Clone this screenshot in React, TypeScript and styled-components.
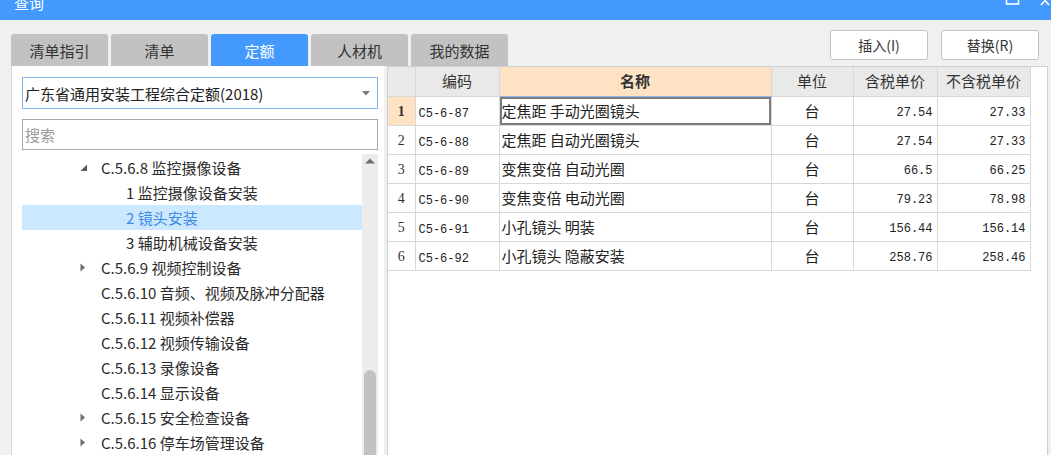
import React from 'react';
import styled, { createGlobalStyle } from 'styled-components';

const GlobalStyle = createGlobalStyle`
  html, body {
    margin: 0;
    padding: 0;
    background: #f0f0f0;
    overflow: hidden;
  }
  body {
    font-family: "Noto Sans CJK SC", "Noto Sans", sans-serif;
    font-size: 15px;
    color: #2b2b2b;
  }
`;

interface treeItem {
  level: number;
  text: string;
  toggle?: 'open' | 'closed';
  selected?: boolean;
}

interface rowInt {
  code: string;
  name: string;
  unit: string;
  taxPrice: string;
  price: string;
}

const TABS = ['清单指引', '清单', '定额', '人材机', '我的数据'];

const TREE: treeItem[] = [
  { level: 1, text: 'C.5.6.8 监控摄像设备', toggle: 'open' },
  { level: 2, text: '1 监控摄像设备安装' },
  { level: 2, text: '2 镜头安装', selected: true },
  { level: 2, text: '3 辅助机械设备安装' },
  { level: 1, text: 'C.5.6.9 视频控制设备', toggle: 'closed' },
  { level: 1, text: 'C.5.6.10 音频、视频及脉冲分配器' },
  { level: 1, text: 'C.5.6.11 视频补偿器' },
  { level: 1, text: 'C.5.6.12 视频传输设备' },
  { level: 1, text: 'C.5.6.13 录像设备' },
  { level: 1, text: 'C.5.6.14 显示设备' },
  { level: 1, text: 'C.5.6.15 安全检查设备', toggle: 'closed' },
  { level: 1, text: 'C.5.6.16 停车场管理设备', toggle: 'closed' },
];

const ROWS: rowInt[] = [
  { code: 'C5-6-87', name: '定焦距 手动光圈镜头', unit: '台', taxPrice: '27.54', price: '27.33' },
  { code: 'C5-6-88', name: '定焦距 自动光圈镜头', unit: '台', taxPrice: '27.54', price: '27.33' },
  { code: 'C5-6-89', name: '变焦变倍 自动光圈', unit: '台', taxPrice: '66.5', price: '66.25' },
  { code: 'C5-6-90', name: '变焦变倍 电动光圈', unit: '台', taxPrice: '79.23', price: '78.98' },
  { code: 'C5-6-91', name: '小孔镜头 明装', unit: '台', taxPrice: '156.44', price: '156.14' },
  { code: 'C5-6-92', name: '小孔镜头 隐蔽安装', unit: '台', taxPrice: '258.76', price: '258.46' },
];

const App: React.FC = () => {
  return (
    <Window>
      <GlobalStyle />
      <TitleBar>
        <Title>查询</Title>
        <WinButtons>
          <svg width="16" height="14" viewBox="0 0 16 14">
            <rect x="1.5" y="-6" width="12" height="10" fill="none" stroke="#fff" strokeWidth="1.6" />
          </svg>
          <svg width="14" height="14" viewBox="0 0 14 14">
            <path d="M1 -4 L9 5 M9 -4 L1 5" stroke="#fff" strokeWidth="1.6" />
          </svg>
        </WinButtons>
      </TitleBar>

      <HeaderRow>
        <Tabs>
          {TABS.map((t) => (
            <Tab key={t} $active={t === '定额'}>
              {t}
            </Tab>
          ))}
        </Tabs>
        <Actions>
          <ActionBtn>插入(I)</ActionBtn>
          <ActionBtn>替换(R)</ActionBtn>
        </Actions>
      </HeaderRow>

      <Body>
        <LeftPanel>
          <Select>
            <span>广东省通用安装工程综合定额(2018)</span>
            <svg width="8" height="5" viewBox="0 0 8 5">
              <path d="M0 0 L8 0 L4 4.5 Z" fill="#7a7a7a" />
            </svg>
          </Select>
          <Search>搜索</Search>
          <TreeWrap>
            <TreeList>
              {TREE.map((item) => (
                <TreeRow key={item.text} $selected={!!item.selected}>
                  <Indent $level={item.level} />
                  {item.level === 1 && (
                    <Toggle>
                      {item.toggle === 'open' && (
                        <svg width="8" height="8" viewBox="0 0 8 8">
                          <path d="M7 0.5 L7 7 L0.5 7 Z" fill="#5a5a5a" />
                        </svg>
                      )}
                      {item.toggle === 'closed' && (
                        <svg width="6" height="9" viewBox="0 0 6 9">
                          <path d="M0.5 0.5 L5 4.5 L0.5 8.5 Z" fill="#6e6e6e" />
                        </svg>
                      )}
                    </Toggle>
                  )}
                  <TreeText $selected={!!item.selected}>{item.text}</TreeText>
                </TreeRow>
              ))}
            </TreeList>
            <ScrollBar>
              <svg width="12" height="8" viewBox="0 0 12 8">
                <path d="M1 6.5 L6 1.5 L11 6.5 Z" fill="#707070" />
              </svg>
              <Thumb />
            </ScrollBar>
          </TreeWrap>
        </LeftPanel>

        <RightPanel>
          <Grid>
            <colgroup>
              <col style={{ width: 27 }} />
              <col style={{ width: 84 }} />
              <col style={{ width: 272 }} />
              <col style={{ width: 82 }} />
              <col style={{ width: 84 }} />
              <col style={{ width: 93 }} />
            </colgroup>
            <thead>
              <HeadRow>
                <HeadCell />
                <HeadCell>编码</HeadCell>
                <HeadCell $accent>名称</HeadCell>
                <HeadCell>单位</HeadCell>
                <HeadCell>含税单价</HeadCell>
                <HeadCell>不含税单价</HeadCell>
              </HeadRow>
            </thead>
            <tbody>
              {ROWS.map((row, i) => (
                <DataRow key={row.code}>
                  <NumCell $current={i === 0}>{i + 1}</NumCell>
                  <CodeCell $current={i === 0}>{row.code}</CodeCell>
                  <NameCell $focus={i === 0}>{row.name}</NameCell>
                  <UnitCell>{row.unit}</UnitCell>
                  <PriceCell>{row.taxPrice}</PriceCell>
                  <PriceCell>{row.price}</PriceCell>
                </DataRow>
              ))}
            </tbody>
          </Grid>
        </RightPanel>
      </Body>
    </Window>
  );
};

export default App;

const Window = styled.div`
  width: 1051px;
  height: 455px;
  display: flex;
  flex-direction: column;
  overflow: hidden;
`;

const TitleBar = styled.div`
  height: 20px;
  flex: none;
  background: #4499ff;
  display: flex;
  align-items: flex-start;
  padding-left: 14px;
  overflow: hidden;
`;

const Title = styled.div`
  color: #ffffff;
  font-size: 15px;
  line-height: 15px;
  margin-top: -5px;
`;

const WinButtons = styled.div`
  margin-left: auto;
  display: flex;
  gap: 19px;
  margin-right: -3px;

  svg {
    display: block;
  }
`;

const HeaderRow = styled.div`
  height: 46px;
  flex: none;
  display: flex;
  padding: 0 12px 0 11px;
`;

const Tabs = styled.div`
  align-self: flex-end;
  display: flex;
  gap: 3px;
`;

const Tab = styled.div<{ $active: boolean }>`
  width: 97px;
  height: 32px;
  border-radius: 3px 3px 0 0;
  display: flex;
  align-items: center;
  justify-content: center;
  font-size: 15px;
  background: ${(p) => (p.$active ? '#4499ff' : '#c2c2c2')};
  color: ${(p) => (p.$active ? '#ffffff' : '#333333')};
`;

const Actions = styled.div`
  margin-left: auto;
  margin-top: 10px;
  display: flex;
  gap: 13px;
`;

const ActionBtn = styled.div`
  box-sizing: border-box;
  width: 98px;
  height: 30px;
  border: 1px solid #c4c4c4;
  border-radius: 3px;
  background: #ffffff;
  display: flex;
  align-items: center;
  justify-content: center;
  font-size: 14px;
  color: #333333;
`;

const Body = styled.div`
  flex: 1;
  display: flex;
  min-height: 0;
  padding-left: 11px;
`;

const LeftPanel = styled.div`
  width: 362px;
  background: #ffffff;
  border-left: 1px solid #dadada;
  padding: 11px 0 0 10px;
  display: flex;
  flex-direction: column;
  overflow: hidden;
`;

const Select = styled.div`
  width: 356px;
  height: 32px;
  box-sizing: border-box;
  flex: none;
  border: 1px solid #7eb4ea;
  display: flex;
  align-items: center;
  justify-content: space-between;
  padding: 0 7px 0 2px;
  font-size: 15px;
  color: #222222;

  svg {
    display: block;
  }
`;

const Search = styled.div`
  margin-top: 10px;
  width: 356px;
  height: 31px;
  box-sizing: border-box;
  flex: none;
  border: 1px solid #a9a9a9;
  display: flex;
  align-items: center;
  padding-left: 2px;
  font-size: 15px;
  color: #9a9a9a;
`;

const TreeWrap = styled.div`
  margin-top: 4px;
  flex: 1;
  width: 356px;
  display: flex;
  min-height: 0;
`;

const TreeList = styled.div`
  flex: 1;
  display: flex;
  flex-direction: column;
  padding-top: 1px;
`;

const TreeRow = styled.div<{ $selected: boolean }>`
  height: 25px;
  flex: none;
  display: flex;
  align-items: center;
  background: ${(p) => (p.$selected ? '#cce8ff' : 'transparent')};
`;

const Indent = styled.div<{ $level: number }>`
  width: ${(p) => (p.$level === 1 ? 57 : 104)}px;
  flex: none;
`;

const Toggle = styled.div`
  width: 21px;
  flex: none;
  display: flex;
  align-items: center;
  padding-left: 1px;

  svg {
    display: block;
  }
`;

const TreeText = styled.span<{ $selected: boolean }>`
  font-size: 15px;
  white-space: nowrap;
  color: ${(p) => (p.$selected ? '#3d8ae6' : '#2b2b2b')};
`;

const ScrollBar = styled.div`
  width: 16px;
  flex: none;
  background: #ececec;
  display: flex;
  flex-direction: column;
  align-items: center;
  padding-top: 3px;

  svg {
    display: block;
  }
`;

const Thumb = styled.div`
  margin-top: 205px;
  width: 12px;
  flex: 1;
  background: #c2c2c2;
  border-radius: 6px 6px 0 0;
`;

const RightPanel = styled.div`
  margin-left: 3px;
  width: 659px;
  background: #ffffff;
  border: 1px solid #d0d0d0;
  border-bottom: none;
`;

const Grid = styled.table`
  border-collapse: collapse;
  table-layout: fixed;
  width: 642px;

  td,
  th {
    border: 1px solid #d8d8d8;
    padding: 0;
    line-height: 18px;
    white-space: nowrap;
    overflow: hidden;
    vertical-align: middle;
  }
  thead th {
    border-top: none;
  }
  tr td:first-child,
  tr th:first-child {
    border-left: none;
  }
`;

const HeadRow = styled.tr`
  height: 29px;
`;

const DataRow = styled.tr`
  height: 29px;
`;

const HeadCell = styled.th<{ $accent?: boolean }>`
  background: ${(p) => (p.$accent ? '#fde3c4' : '#e9e9e9')};
  font-weight: ${(p) => (p.$accent ? 700 : 400)};
  font-size: 15px;
  color: #333333;
  text-align: center;
  ${(p) => (p.$accent ? 'border-bottom: 1px solid #8cbcf0 !important;' : '')}
`;

const NumCell = styled.td<{ $current: boolean }>`
  background: ${(p) => (p.$current ? '#fde3c4' : '#ffffff')};
  font-family: "Liberation Serif", serif;
  font-weight: ${(p) => (p.$current ? 700 : 400)};
  font-size: 14px;
  color: #333333;
  text-align: center;
  padding-top: 2px !important;
`;

const CodeCell = styled.td<{ $current: boolean }>`
  font-family: "Liberation Mono", monospace;
  font-size: 12px;
  color: #222222;
  padding-left: 3px !important;
  padding-top: 6px !important;
  ${(p) => (p.$current ? 'border-left: 1px solid #4499ff !important;' : '')}
`;

const NameCell = styled.td<{ $focus: boolean }>`
  font-size: 15px;
  color: #222222;
  padding-left: 2px !important;
  ${(p) => (p.$focus ? 'box-shadow: inset 0 0 0 2px #7c7c7c;' : '')}
`;

const UnitCell = styled.td`
  font-size: 15px;
  color: #222222;
  text-align: center;
`;

const PriceCell = styled.td`
  font-family: "Liberation Mono", monospace;
  font-size: 12px;
  color: #222222;
  text-align: right;
  padding-right: 4px !important;
  padding-top: 4px !important;
`;
